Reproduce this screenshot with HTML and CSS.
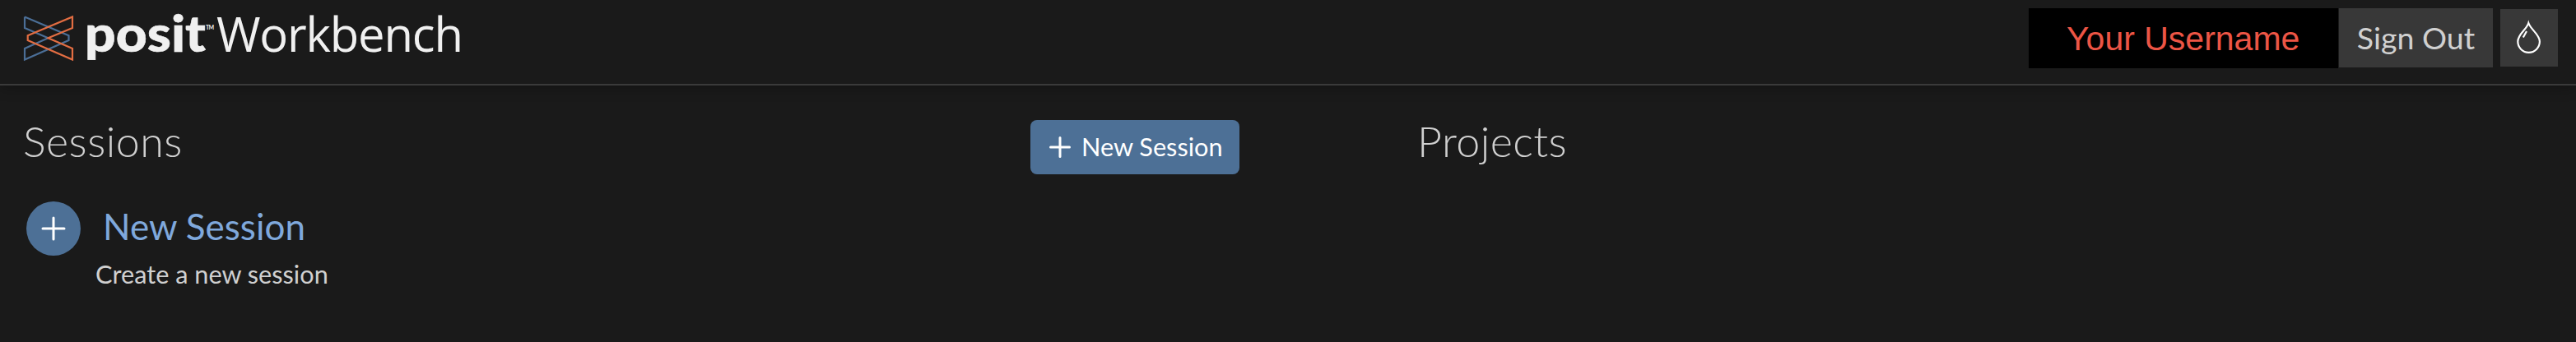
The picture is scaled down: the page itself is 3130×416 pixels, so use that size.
FILE: index.html
```
<!DOCTYPE html>
<html lang="en">
<head>
<meta charset="utf-8">
<title>Posit Workbench</title>
<link rel="stylesheet" href="styles.css">
</head>
<body>
<header class="topbar">
  <svg class="logo" width="600" height="100" viewBox="0 0 600 100">
    <g fill="none" stroke-width="2.2">
      <path stroke="#4b6e96" d="M30 20.500V34L58.500 46.300M30 20.500L83.500 43.300V49L30 72.500V59L58.500 46.300"/>
      <path stroke="#e26d42" d="M88 20.500V34L58.500 46.300L88 59V72.500L33.700 49V43.300Z"/>
    </g>
    <text class="brand" x="103" y="62.500" textLength="147" lengthAdjust="spacingAndGlyphs">posit</text>
    <text class="mark" x="250" y="36" textLength="10">TM</text>
    <text class="product" x="263" y="62.500" textLength="300">Workbench</text>
  </svg>
  <nav class="account">
    <span class="username">Your Username</span>
    <button class="sign-out">Sign Out</button>
    <button class="theme" aria-label="Theme">
      <svg width="70" height="70" viewBox="0 0 70 70" fill="none" stroke="#fff" stroke-width="2.200">
        <path d="M34.300 17C32 25 21.300 30.500 21.300 39.500A13.300 13.300 0 0 0 47.900 39.500C47.900 31 37 25 34.300 17Z"/>
        <path d="M32 27L27.800 34.500"/>
      </svg>
    </button>
  </nav>
</header>
<main class="columns">
  <section class="sessions">
    <div class="heading-row">
      <h1 class="heading">Sessions</h1>
      <button class="new-button">
        <svg width="26" height="26" viewBox="0 0 26 26"><path class="plus" d="M13 1.500V24.500M1.500 13H24.500"/></svg>
        <span class="new-label">New Session</span>
      </button>
    </div>
    <div class="entry">
      <span class="circle"><svg width="30" height="30" viewBox="0 0 30 30"><path class="plus" d="M15 2V28M2 15H28"/></svg></span>
      <a class="entry-title">New Session</a>
    </div>
    <p class="entry-note">Create a new session</p>
  </section>
  <section class="projects">
    <h1 class="heading">Projects</h1>
  </section>
</main>
</body>
</html>
```
FILE: styles.css
```
* { box-sizing: border-box; }
body { margin: 0; height: 416px; overflow: hidden; background: #1a1a1a; color: #d0d0d0; font-family: Lato, sans-serif; }
button { border: 0; padding: 0; font-family: inherit; }
svg { display: block; flex: none; }
.topbar { display: flex; justify-content: space-between; height: 104px; border-bottom: 2px solid #3a3a3a; box-shadow: 0 2px 16px rgba(0, 0, 0, .3); }
.brand { font: 900 61px Lato, sans-serif; fill: #f0f0f0; stroke: #f0f0f0; stroke-width: .6px; }
.mark { font: 700 7px Lato, sans-serif; fill: #f0f0f0; }
.product { font: 400 58px "Open Sans", sans-serif; fill: #f0f0f0; }
.account { display: flex; align-items: flex-start; padding: 10px 22px 0 0; }
.username { width: 376px; height: 73px; margin-right: 1px; padding-left: 46px; background: #000; color: #ec5545; font: 41px/74px "Liberation Sans", Arial, sans-serif; white-space: nowrap; }
.sign-out { width: 187px; height: 72px; margin-right: 9px; background: #383838; color: #d0d0d0; font-size: 37.5px; line-height: 72px; }
.theme { width: 70px; height: 70px; margin-top: 1px; background: #383838; }
.columns { display: flex; padding-top: 37px; }
.sessions { width: 1506px; padding-left: 28px; }
.projects { padding-left: 216px; }
.heading-row { display: flex; justify-content: space-between; height: 104px; }
.heading { margin: 0; font-size: 52px; line-height: 61px; font-weight: 300; letter-spacing: .45px; }
.new-button { display: flex; align-items: center; width: 254px; height: 66px; margin-top: 5px; padding-left: 23px; border-radius: 8px; background: #4d7096; color: #fff; }
.new-label { margin-left: 13px; font-size: 30.7px; line-height: 38px; white-space: nowrap; }
.plus { fill: none; stroke: #fff; stroke-width: 3; stroke-linecap: round; }
.entry { display: flex; height: 71px; padding-left: 4px; }
.circle { display: flex; align-items: center; justify-content: center; width: 66px; height: 66px; border-radius: 50%; background: #4d7096; }
.entry-title { margin-left: 27px; font-size: 44px; line-height: 60px; color: #7fa8dc; }
.entry-note { margin: 0 0 0 88px; font-size: 30.7px; line-height: 36px; }
```
